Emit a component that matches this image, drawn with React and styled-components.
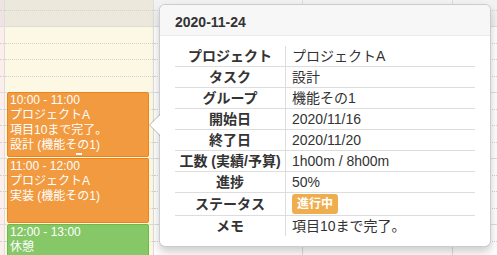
import React from "react";
import styled, { createGlobalStyle } from "styled-components";

const GlobalStyle = createGlobalStyle`
  html, body { margin: 0; padding: 0; }
  body {
    font-family: "Liberation Sans", "Noto Sans CJK JP", sans-serif;
    background: #fff;
    overflow: hidden;
  }
`;

const SLOT = 16.5;
const SLOT_COUNT = 20; // 8:00 - 13:00

const Viewport = styled.div`
  position: relative;
  width: 497px;
  height: 255px;
  overflow: hidden;
`;

const Grid = styled.div`
  display: flex;
  margin-top: -40px;
`;

const Column = styled.div`
  position: relative;
  flex: ${(p) => (p.$w ? `0 0 ${p.$w}px` : "1 1 auto")};
  border-right: ${(p) => (p.$last ? "none" : "1px solid #ddd")};
  background: ${(p) => p.$bg};
  display: flex;
  flex-direction: column;
`;

const Slot = styled.div`
  height: ${SLOT}px;
  box-sizing: border-box;
  border-top: 1px ${(p) => (p.$major ? "solid #dddddd" : "dotted #d2d2d2")};
  background: ${(p) => (p.$off ? p.$offBg : "transparent")};
`;

const Event = styled.div`
  position: absolute;
  left: 2px;
  right: 4px;
  box-sizing: border-box;
  background: ${(p) => p.$bg};
  border: 1px solid ${(p) => p.$border};
  border-radius: 2px;
  color: #fff;
  font-size: 12px;
  line-height: 15px;
  padding: 0 2px;
  overflow: hidden;
  white-space: nowrap;
`;

const Resizer = styled.div`
  position: absolute;
  bottom: 1px;
  left: 50%;
  margin-left: -2px;
  width: 6px;
  height: 2px;
  background: #fff;
`;

const Popover = styled.div`
  position: absolute;
  left: 159px;
  top: 4px;
  width: 332px;
  box-sizing: border-box;
  background: #fff;
  border: 1px solid rgba(0, 0, 0, 0.2);
  border-radius: 6px;
  box-shadow: 0 5px 10px rgba(0, 0, 0, 0.2);
  color: #333;

  &::before,
  &::after {
    content: "";
    position: absolute;
    width: 0;
    height: 0;
    border-style: solid;
  }
  &::before {
    left: -11px;
    top: 109px;
    border-width: 11px 11px 11px 0;
    border-color: transparent rgba(0, 0, 0, 0.25) transparent transparent;
  }
  &::after {
    left: -10px;
    top: 110px;
    border-width: 10px 10px 10px 0;
    border-color: transparent #fff transparent transparent;
  }
`;

const PopHeader = styled.div`
  padding: 10px 15px 6px;
  font-size: 14px;
  line-height: 14px;
  font-weight: bold;
  background: #f7f7f7;
  border-bottom: 1px solid #ebebeb;
  border-radius: 5px 5px 0 0;
`;

const PopBody = styled.div`
  padding: 10px 15px 10px 15px;
`;

const InfoTable = styled.table`
  width: 300px;
  border-collapse: collapse;
  font-size: 14px;
  color: #333;
`;

const Row = styled.tr`
  & + & > * {
    border-top: 1px solid #ddd;
  }
`;

const Label = styled.th`
  width: 110px;
  padding: 0;
  height: ${(p) => p.$h || 20}px;
  line-height: ${(p) => p.$h || 20}px;
  text-align: center;
  font-weight: bold;
  white-space: nowrap;
  border-right: 1px solid #ddd;
`;

const Value = styled.td`
  padding: 0 0 0 6px;
  height: ${(p) => p.$h || 20}px;
  line-height: ${(p) => p.$h || 20}px;
  text-align: left;
  white-space: nowrap;
`;

const Badge = styled.span`
  display: inline-block;
  vertical-align: middle;
  height: 20px;
  line-height: 20px;
  padding: 0 5px;
  margin-top: -2px;
  background: #f0ad4e;
  color: #fff;
  font-size: 12px;
  font-weight: bold;
  border-radius: 3px;
`;

const columns = [
  { w: 4, bg: "#fdeeee", offBg: "#efe4e4" },
  { w: 148, bg: "#fcf8e3", offBg: "#ece9dc", today: true },
  { w: 148, bg: "#ffffff", offBg: "#f2f2f2" },
  { w: 149, bg: "#ffffff", offBg: "#f2f2f2" },
  { w: 0, bg: "#ffffff", offBg: "#f2f2f2", last: true },
];

const events = [
  {
    slot: 8,
    bg: "#f19a40",
    border: "#ec8419",
    lines: ["10:00 - 11:00", "プロジェクトA", "項目10まで完了。", "設計 (機能その1)"],
    resizer: true,
  },
  {
    slot: 12,
    bg: "#f19a40",
    border: "#ec8419",
    lines: ["11:00 - 12:00", "プロジェクトA", "実装 (機能その1)"],
  },
  {
    slot: 16,
    bg: "#86c767",
    border: "#6dbb47",
    lines: ["12:00 - 13:00", "休憩"],
  },
];

const info = [
  ["プロジェクト", "プロジェクトA"],
  ["タスク", "設計"],
  ["グループ", "機能その1"],
  ["開始日", "2020/11/16"],
  ["終了日", "2020/11/20"],
  ["工数 (実績/予算)", "1h00m / 8h00m"],
  ["進捗", "50%"],
  ["ステータス", "badge"],
  ["メモ", "項目10まで完了。"],
];

export default function App() {
  return (
    <>
      <GlobalStyle />
      <Viewport>
        <Grid>
          {columns.map((c, ci) => (
            <Column key={ci} $w={c.w} $bg={c.bg} $last={c.last}>
              {Array.from({ length: SLOT_COUNT }).map((_, i) => (
                <Slot key={i} $major={i % 4 === 0} $off={i < 4} $offBg={c.offBg} />
              ))}
              {c.today &&
                events.map((e, ei) => (
                  <Event
                    key={ei}
                    $bg={e.bg}
                    $border={e.border}
                    style={{ top: e.slot * SLOT, height: SLOT * 4 - 1 }}
                  >
                    {e.lines.map((l, li) => (
                      <div key={li}>{l}</div>
                    ))}
                    {e.resizer && <Resizer />}
                  </Event>
                ))}
            </Column>
          ))}
        </Grid>
        <Popover>
          <PopHeader>2020-11-24</PopHeader>
          <PopBody>
            <InfoTable>
              <tbody>
                {info.map(([k, v]) => (
                  <Row key={k}>
                    <Label $h={v === "badge" ? 22 : 20}>{k}</Label>
                    <Value $h={v === "badge" ? 22 : 20}>
                      {v === "badge" ? <Badge>進行中</Badge> : v}
                    </Value>
                  </Row>
                ))}
              </tbody>
            </InfoTable>
          </PopBody>
        </Popover>
      </Viewport>
    </>
  );
}
